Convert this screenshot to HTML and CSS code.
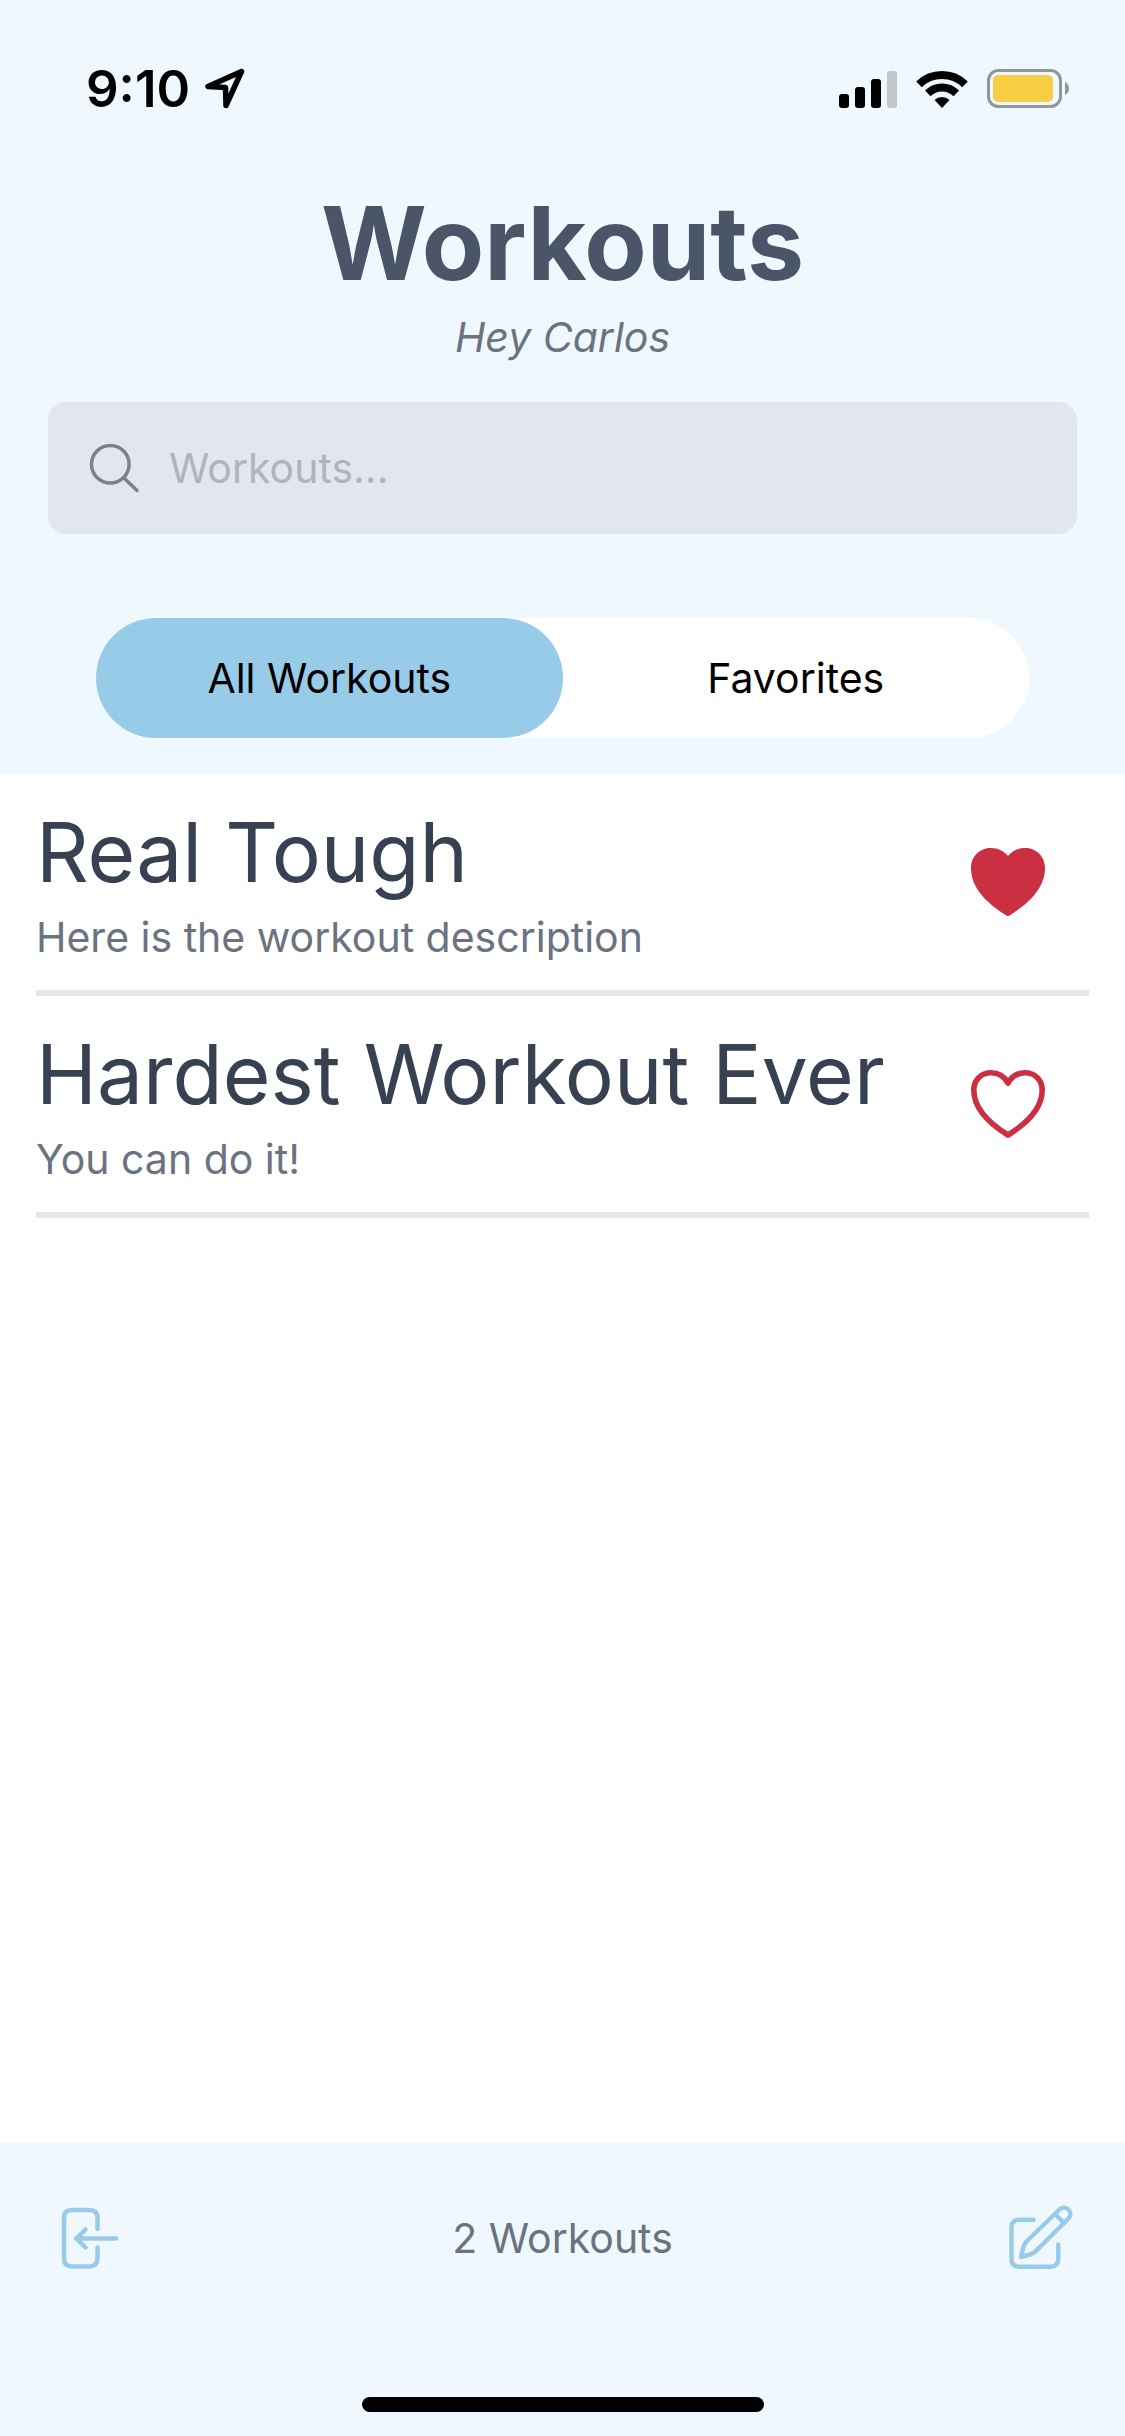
FILE: index.html
```html
<!DOCTYPE html>
<html lang="en">
<head>
<meta charset="utf-8">
<meta name="viewport" content="width=device-width, initial-scale=1">
<title>Workouts</title>
<link rel="stylesheet" href="styles.css">
</head>
<body>
<div class="app">
  <header class="header">
    <div class="status">
      <div class="status-group status-time">
        <span>9:10</span>
        <svg width="42" height="42" viewBox="0 0 42 42" fill="none" stroke="#000" stroke-width="5.500" stroke-linejoin="round"><path d="M37.500 3.500 4 18.500 21.500 19.500 22 37.500Z"/></svg>
      </div>
      <div class="status-group status-icons">
        <svg width="58" height="38" viewBox="0 0 58 38"><rect y="24" width="10" height="14" rx="3"/><rect x="16" y="17" width="10" height="21" rx="3"/><rect x="32" y="9" width="10" height="29" rx="3"/><rect x="48" y="1" width="10" height="37" rx="3" fill="#c1c6cb"/></svg>
        <svg width="52" height="40" viewBox="0 0 52 40" fill="none" stroke="#000" stroke-width="8"><path d="M3 15.300A33 33 0 0 1 49 15.300M11.700 24.300A20.500 20.500 0 0 1 40.300 24.300"/><path d="M26 39 18.500 31A11 11 0 0 1 33.500 31Z" fill="#000" stroke="none"/></svg>
        <svg width="82" height="40" viewBox="0 0 82 40"><rect x="1.500" y="1.500" width="72" height="36" rx="10" fill="none" stroke="#929699" stroke-width="3"/><rect x="6" y="6" width="60" height="27" rx="5" fill="#f7ce46"/><path d="M78 13Q82 15 82 19.500T78 26Z" fill="#929699"/></svg>
      </div>
    </div>
    <h1 class="title">Workouts</h1>
    <p class="greeting">Hey Carlos</p>
    <label class="search">
      <svg width="52" height="52" viewBox="0 0 52 52" fill="none" stroke="#808080" stroke-width="3.500" stroke-linecap="round"><circle cx="22.300" cy="22.300" r="18.800"/><path d="M36 36 49 48.500"/></svg>
      <input class="search-input" type="search" placeholder="Workouts..." aria-label="Search workouts">
    </label>
    <nav class="tabs">
      <button class="tab tab-active" type="button">All Workouts</button>
      <button class="tab" type="button">Favorites</button>
    </nav>
  </header>
  <main class="list">
    <article class="row">
      <div>
        <h2 class="row-title">Real Tough</h2>
        <p class="row-text">Here is the workout description</p>
      </div>
      <button class="icon-button" type="button" aria-label="Remove from favorites">
        <svg width="74" height="68" viewBox="0 0 74 68"><path fill="#cb3042" d="M37 8C33 3 27 0 20 0 9 0 0 8 0 20 0 42 19 57 35 67.300Q37 68.500 39 67.300C55 57 74 42 74 20 74 8 65 0 54 0 47 0 41 3 37 8Z"/></svg>
      </button>
    </article>
    <article class="row">
      <div>
        <h2 class="row-title">Hardest Workout Ever</h2>
        <p class="row-text">You can do it!</p>
      </div>
      <button class="icon-button" type="button" aria-label="Add to favorites">
        <svg width="74" height="68" viewBox="0 0 74 68"><path fill="none" stroke="#cb3042" stroke-width="5.600" stroke-linejoin="round" d="M37 13C33 6 27 2.800 20 2.800 10 2.800 2.800 10 2.800 20 2.800 40 20 54.500 37 65 54 54.500 71.200 40 71.200 20 71.200 10 64 2.800 54 2.800 47 2.800 41 6 37 13Z"/></svg>
      </button>
    </article>
  </main>
  <footer class="footer">
    <div class="toolbar">
      <button class="icon-button" type="button" aria-label="Log out">
        <svg width="68" height="68" viewBox="-9 0 68 68" fill="none" stroke="#98cbe8" stroke-width="4.500" stroke-linecap="round" stroke-linejoin="round"><path d="M37.500 25V14Q37.500 6 29.500 6H12Q4 6 4 14V54.500Q4 62.500 12 62.500H29.500Q37.500 62.500 37.500 54.500V43.500M56 34.500H16M25.500 25.500 16.500 34.500 25.500 43.500"/></svg>
      </button>
      <p class="count">2 Workouts</p>
      <button class="icon-button" type="button" aria-label="New workout">
        <svg width="68" height="68" viewBox="0 0 68 68" fill="none" stroke="#98cbe8" stroke-width="4.500" stroke-linecap="round" stroke-linejoin="round"><path d="M27.500 15.700H13.500Q5.500 15.700 5.500 23.700V54.700Q5.500 62.700 13.500 62.700H44.300Q52.300 62.700 52.300 54.700V40.500M15 53 17 44.500Q18.500 39 22 36L53.500 5.500A6 6 0 0 1 62.500 14.500L32 45Q29 48.500 24.500 50.300ZM49.500 10.500 57.500 18.500"/></svg>
      </button>
    </div>
    <div class="home-bar"></div>
  </footer>
</div>
</body>
</html>
```
FILE: styles.css
```css
* {
  box-sizing: border-box;
  margin: 0;
}

body {
  font-family: Inter, "Liberation Sans", sans-serif;
  font-size: 41px;
  line-height: 60px;
  color: #6b7280;
  background: #fff;
}

svg {
  display: block;
  flex: none;
}

button {
  font: inherit;
  padding: 0;
  border: 0;
  background: none;
  cursor: pointer;
}

.app {
  display: flex;
  flex-direction: column;
  min-height: 100vh;
}

.header {
  padding: 45px 48px 36px;
  background: #f0f8ff;
}

.status {
  display: flex;
  justify-content: space-between;
  align-items: center;
  height: 88px;
  margin-bottom: 47px;
  padding: 0 8px 0 38px;
}

.status-group {
  display: flex;
  align-items: center;
}

.status-time {
  gap: 14px;
  font-size: 51px;
  font-weight: 600;
  color: #000;
}

.status-icons {
  gap: 19px;
}

.title {
  font-size: 102px;
  line-height: 126px;
  font-weight: 700;
  text-align: center;
  color: #4a5568;
}

.greeting {
  font-style: italic;
  line-height: 62px;
  text-align: center;
}

.search {
  display: flex;
  align-items: center;
  gap: 29px;
  height: 132px;
  margin-top: 34px;
  padding: 0 40px;
  border-radius: 18px;
  background: #e2e6ee;
}

.search-input {
  flex: 1;
  min-width: 0;
  padding: 0;
  border: 0;
  outline: 0;
  background: none;
  font: inherit;
  color: #374151;
  appearance: none;
}

.search-input::placeholder {
  color: #b0b4bc;
}

.tabs {
  display: flex;
  margin: 84px 48px 0;
  border-radius: 60px;
  background: #fff;
}

.tab {
  flex: 1;
  height: 120px;
  border-radius: 60px;
  color: #000;
}

.tab-active {
  background: #98cbe8;
}

.list {
  flex: 1;
  padding: 0 36px;
}

.row {
  display: flex;
  justify-content: space-between;
  align-items: center;
  padding: 24px 44px 24px 0;
  border-bottom: 6px solid #e5e7eb;
}

.row-title {
  font-size: 82px;
  line-height: 110px;
  font-weight: 400;
  color: #374151;
}

.row-text {
  line-height: 58px;
}

.footer {
  padding: 60px 51px 24px;
  background: #f0f8ff;
}

.toolbar {
  display: flex;
  justify-content: space-between;
  align-items: center;
  height: 72px;
}

.home-bar {
  width: 402px;
  height: 15px;
  margin: 123px auto 0;
  border-radius: 8px;
  background: #000;
}
```
